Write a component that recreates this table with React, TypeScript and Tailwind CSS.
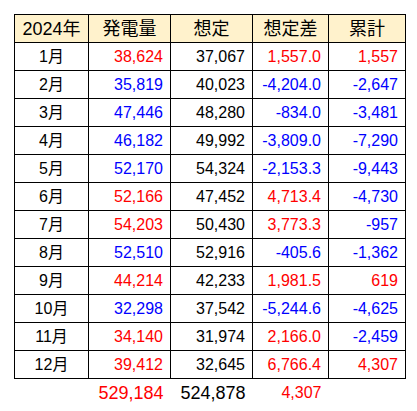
import React from "react";

type Row = [string, string, string, string, string];

const rows: Row[] = [
  ["1月", "38,624", "37,067", "1,557.0", "1,557"],
  ["2月", "35,819", "40,023", "-4,204.0", "-2,647"],
  ["3月", "47,446", "48,280", "-834.0", "-3,481"],
  ["4月", "46,182", "49,992", "-3,809.0", "-7,290"],
  ["5月", "52,170", "54,324", "-2,153.3", "-9,443"],
  ["6月", "52,166", "47,452", "4,713.4", "-4,730"],
  ["7月", "54,203", "50,430", "3,773.3", "-957"],
  ["8月", "52,510", "52,916", "-405.6", "-1,362"],
  ["9月", "44,214", "42,233", "1,981.5", "619"],
  ["10月", "32,298", "37,542", "-5,244.6", "-4,625"],
  ["11月", "34,140", "31,974", "2,166.0", "-2,459"],
  ["12月", "39,412", "32,645", "6,766.4", "4,307"],
];

const tone = (v: string) => (v.startsWith("-") ? "text-[#0000ff]" : "text-[#ff0000]");

const cell = "border border-black h-[28px] p-0 pr-[7px] text-right";
const head = "border border-black h-[28px] p-0 font-normal text-[18px]";

export default function App() {
  return (
    <div
      className="bg-white w-[417px] h-[411px] pt-[14px] pl-[14px] text-black text-[16px] leading-none"
      style={{ fontFamily: '"Liberation Sans", "Noto Sans CJK JP", sans-serif' }}
    >
      <table className="border-collapse table-fixed w-[391px]">
        <colgroup>
          <col className="w-[74px]" />
          <col className="w-[82px]" />
          <col className="w-[82px]" />
          <col className="w-[76px]" />
          <col className="w-[77px]" />
        </colgroup>
        <thead>
          <tr className="bg-[#fff2cc]">
            <th className={head}>2024年</th>
            <th className={head}>発電量</th>
            <th className={head}>想定</th>
            <th className={head}>想定差</th>
            <th className={head}>累計</th>
          </tr>
        </thead>
        <tbody>
          {rows.map(([m, gen, plan, diff, cum]) => (
            <tr key={m}>
              <td className="border border-black h-[28px] p-0 text-center">{m}</td>
              <td className={`${cell} ${tone(diff)}`}>{gen}</td>
              <td className={cell}>{plan}</td>
              <td className={`${cell} ${tone(diff)}`}>{diff}</td>
              <td className={`${cell} ${tone(cum)}`}>{cum}</td>
            </tr>
          ))}
          <tr>
            <td className="h-[28px] p-0" />
            <td className="h-[28px] p-0 pr-[7px] text-right text-[18px] text-[#ff0000]">529,184</td>
            <td className="h-[28px] p-0 pr-[7px] text-right text-[18px]">524,878</td>
            <td className="h-[28px] p-0 pr-[7px] text-right text-[#ff0000]">4,307</td>
            <td className="h-[28px] p-0" />
          </tr>
        </tbody>
      </table>
    </div>
  );
}
